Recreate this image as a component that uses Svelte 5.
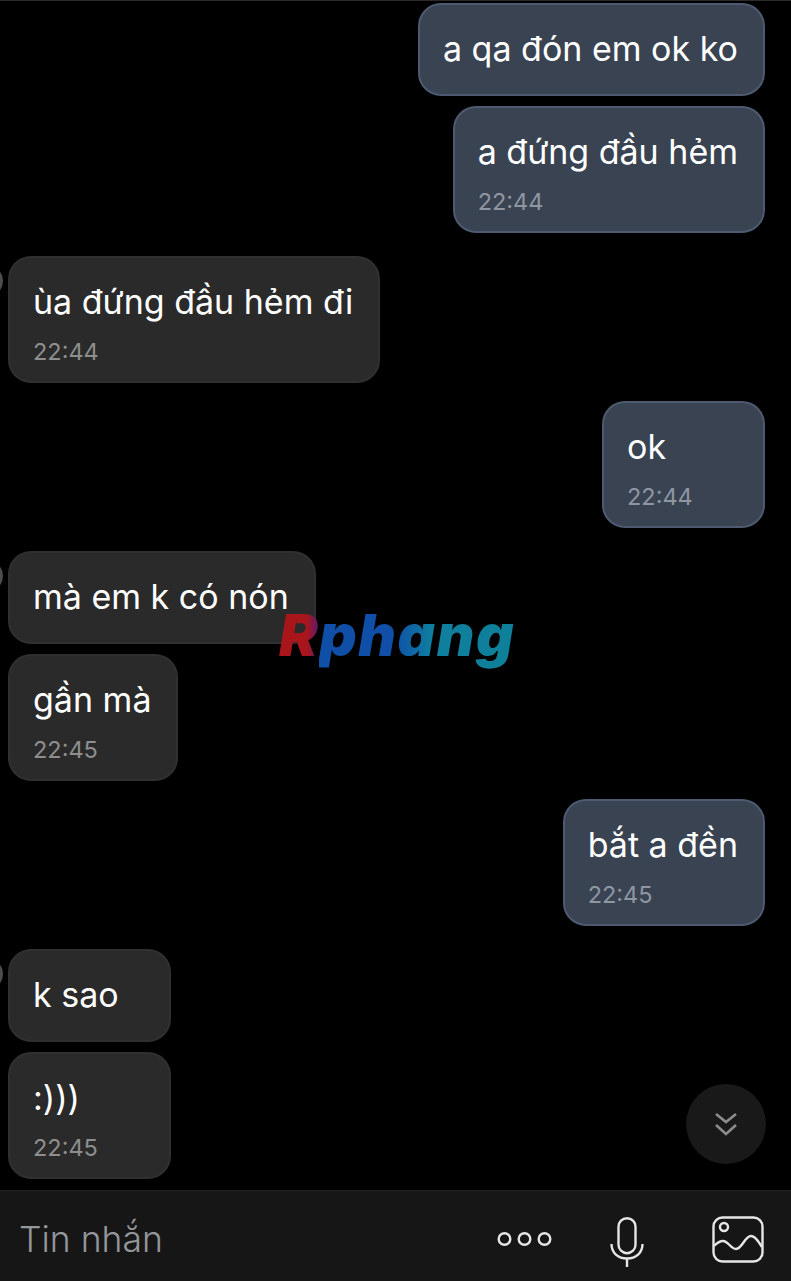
<script>
  const groups = [
    { side: "out", items: [{ text: "a qa đón em ok ko" }, { text: "a đứng đầu hẻm", time: "22:44" }] },
    { side: "in", items: [{ text: "ùa đứng đầu hẻm đi", time: "22:44" }] },
    { side: "out", items: [{ text: "ok", time: "22:44" }] },
    { side: "in", items: [{ text: "mà em k có nón" }, { text: "gần mà", time: "22:45" }] },
    { side: "out", items: [{ text: "bắt a đền", time: "22:45" }] },
    { side: "in", items: [{ text: "k sao" }, { text: ":)))", time: "22:45" }] }
  ];
</script>

<div class="screen">
  <div class="thread">
    {#each groups as group}
      <div class="group {group.side}">
        {#if group.side === "in"}
          <span class="avatar"></span>
        {/if}
        {#each group.items as msg}
          <div class="bubble">
            <div class="text">{msg.text}</div>
            {#if msg.time}
              <div class="time">{msg.time}</div>
            {/if}
          </div>
        {/each}
      </div>
    {/each}
  </div>

  <div class="logo"><span class="r">R</span><span class="rest">phang</span></div>

  <button class="jump" aria-label="Xuống cuối">
    <svg width="24" height="25" viewBox="0 0 24 25" fill="none" stroke="#8c8c8c" stroke-width="2.6">
      <path d="M2 2l10 8 10-8" />
      <path d="M2 13l10 9 10-9" />
    </svg>
  </button>

  <div class="composer">
    <div class="placeholder">Tin nhắn</div>
    <div class="tools">
      <svg class="dots" width="56" height="16" viewBox="0 0 56 16" fill="none" stroke="#e6e6e6" stroke-width="2.4">
        <circle cx="7.500" cy="8" r="5.800" />
        <circle cx="27.500" cy="8" r="5.800" />
        <circle cx="47.500" cy="8" r="5.800" />
      </svg>
      <svg class="mic" width="34" height="50" viewBox="0 0 34 50" fill="none" stroke="#e6e6e6" stroke-width="2.4">
        <rect x="8.5" y="1.2" width="17" height="35" rx="8.5" />
        <path d="M1.5 27c0 9 6.5 14.5 15.500 14.500s15.500-5.500 15.500-14.500" />
        <path d="M17 41.500v8.500" />
      </svg>
      <svg class="pic" width="52" height="47" viewBox="0 0 52 47" fill="none" stroke="#e6e6e6" stroke-width="2.400">
        <rect x="1.500" y="1.500" width="49" height="44" rx="9" />
        <circle cx="12" cy="11" r="4" />
        <path d="M2 30C5 27 8 25 11 25C16 25 19 33 24 33C30 33 33 20 39 20C44 20 47 27 50 31" />
      </svg>
    </div>
  </div>
</div>

<style>
  :global(body) {
    background: #000;
  }
  .screen {
    position: relative;
    width: 791px;
    height: 1281px;
    overflow: hidden;
    background: #000;
    font-family: Inter, "Liberation Sans", sans-serif;
    color: #fff;
  }
  .thread {
    display: flex;
    flex-direction: column;
    height: 1190px;
    padding: 2px 26px 0 8px;
    border-top: 1px solid #2a2a2a;
    box-sizing: border-box;
  }
  .group {
    position: relative;
    display: flex;
    flex-direction: column;
    gap: 10px;
  }
  .group.out {
    align-items: flex-end;
    margin-top: 18.5px;
  }
  .group.out:first-child {
    margin-top: 0;
  }
  .group.in {
    align-items: flex-start;
    margin-top: 22.6px;
  }
  .avatar {
    position: absolute;
    left: -32px;
    top: 10px;
    width: 27px;
    height: 30px;
    border-radius: 50%;
    background: #4d4d4d;
  }
  .bubble {
    box-sizing: border-box;
    min-width: 163px;
    min-height: 93px;
    padding: 23px 25px 0 23px;
    border-radius: 23px;
    border: 2px solid #303030;
    background: #2a2a2a;
  }
  .out .bubble {
    border-color: #4d5a70;
    background: #394352;
  }
  .text {
    font-size: 34px;
    line-height: 42px;
    white-space: nowrap;
  }
  .time {
    margin-top: 15px;
    height: 43px;
    font-size: 23.5px;
    line-height: 28px;
    color: #8e8e8e;
  }
  .out .time {
    color: #8f96a1;
  }
  .logo {
    position: absolute;
    left: 279px;
    top: 597px;
    font-size: 58px;
    line-height: 76px;
    font-weight: 900;
    font-style: italic;
    letter-spacing: 1.6px;
    white-space: nowrap;
  }
  .r {
    background: linear-gradient(90deg, #a8161c 0%, #a8161c 70%, #5a1a70 100%);
    -webkit-background-clip: text;
    background-clip: text;
    color: transparent;
  }
  .rest {
    background: linear-gradient(90deg, #0f4fa8 0%, #0f4fa8 38%, #0f7f9f 58%, #0f8098 100%);
    -webkit-background-clip: text;
    background-clip: text;
    color: transparent;
  }
  .jump {
    position: absolute;
    left: 686px;
    top: 1084px;
    width: 80px;
    height: 80px;
    padding: 0;
    display: flex;
    align-items: center;
    justify-content: center;
    border: 0;
    border-radius: 50%;
    background: #191919;
  }
  .composer {
    display: flex;
    align-items: center;
    justify-content: space-between;
    box-sizing: border-box;
    height: 91px;
    padding: 6px 27px 0 19px;
    border-top: 1px solid #222;
    background: #161616;
  }
  .placeholder {
    font-size: 35.5px;
    font-weight: 300;
    color: #94979c;
  }
  .tools {
    display: flex;
    align-items: center;
  }
  .dots {
    margin-right: 57px;
  }
  .mic {
    margin-right: 68px;
    margin-top: 5px;
  }
</style>
